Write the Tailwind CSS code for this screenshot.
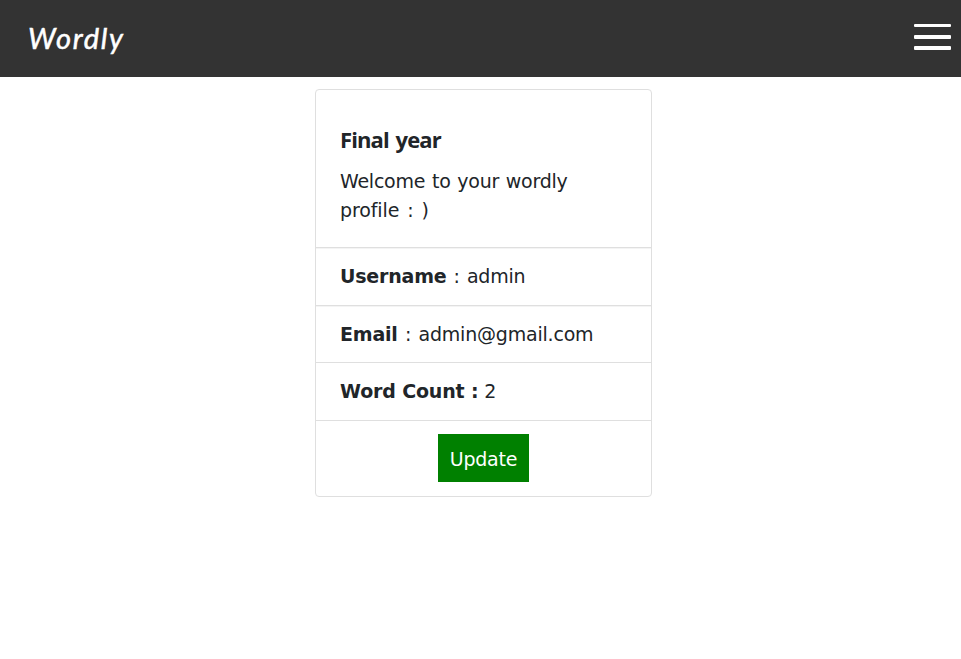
<!DOCTYPE html>
<html lang="en">
<head>
<meta charset="utf-8">
<title>Wordly</title>
<script src="https://cdn.jsdelivr.net/npm/@tailwindcss/browser@4"></script>
</head>
<body class="h-screen overflow-hidden bg-white text-[#212529] font-['DejaVu_Sans',sans-serif]">
<header class="flex h-[77px] items-center justify-between bg-[#333] pl-[28px] pr-[10px]">
  <a class="-mt-px font-['Lato',sans-serif] text-[29px] leading-[44px] italic tracking-[1.7px] text-white [-webkit-text-stroke:0.5px_white]">Wordly</a>
  <button class="-mt-[3px] flex flex-col" aria-label="Menu">
    <span class="h-[3px] w-[37px] rounded-[1px] bg-white"></span>
    <span class="mt-2 h-1 w-[37px] rounded-[1px] bg-white"></span>
    <span class="mt-[7px] h-1 w-[37px] rounded-[1px] bg-white"></span>
  </button>
</header>
<main class="ml-[315px] mt-3 w-[337px] rounded border border-[#dfdfdf] text-[19px] leading-[29px] [font-variant-ligatures:none]">
  <section class="h-[158px] border-b border-[#dfdfdf] px-6 pt-[32px] shadow-[0_1px_0_#f4f4f4]">
    <h1 class="mb-[11px] font-['Open_Sans',sans-serif] text-[22px] font-bold leading-[34px] tracking-[-0.9px] [word-spacing:2px]">Final year</h1>
    <p class="tracking-[-0.25px] [word-spacing:1px]">Welcome to your wordly<br><span class="tracking-[-0.1px] [word-spacing:2px]">profile : )</span></p>
  </section>
  <div class="flex h-[58px] items-center border-b border-[#dfdfdf] px-6 shadow-[0_1px_0_#f4f4f4]"><p class="tracking-[-0.2px] [word-spacing:1.3px]"><b>Username</b> : admin</p></div>
  <div class="flex h-[57px] items-center border-b border-[#dfdfdf] px-6"><p class="tracking-[-0.2px] [word-spacing:1.5px]"><b>Email</b> : admin@gmail.com</p></div>
  <div class="flex h-[58px] items-center border-b border-[#dfdfdf] px-6"><p class="tracking-[-0.15px]"><b>Word Count :</b> 2</p></div>
  <div class="flex h-[75px] justify-center pt-[13px]"><button class="flex h-12 w-[91px] items-center justify-center bg-[#008000] pt-0.5 tracking-[-0.2px] text-white">Update</button></div>
</main>
</body>
</html>
